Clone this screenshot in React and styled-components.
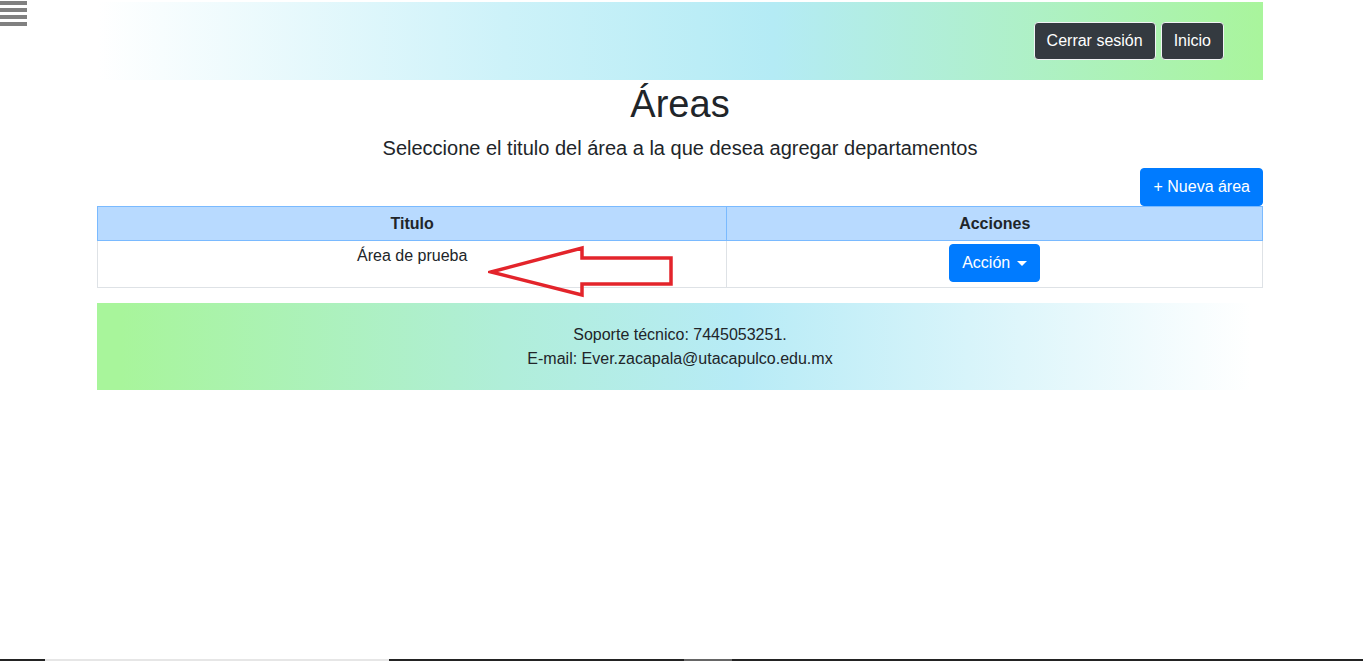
import styled, { createGlobalStyle } from "styled-components";

const GlobalStyle = createGlobalStyle`
  html, body {
    margin: 0;
    padding: 0;
  }
  body {
    font-family: "Liberation Sans", Arial, sans-serif;
    font-size: 16px;
    line-height: 1.5;
    color: #212529;
    background: #fff;
  }
  * {
    box-sizing: border-box;
  }
`;

const Page = styled.div`
  position: relative;
  min-height: 100vh;
  display: flex;
  flex-direction: column;
`;

const MenuToggle = styled.div`
  position: absolute;
  top: 1px;
  left: 0;
  width: 27px;
  display: flex;
  flex-direction: column;
  gap: 3px;
  span {
    display: block;
    height: 4px;
    background: #808080;
  }
`;

const Container = styled.div`
  width: 1166px;
  margin-left: 97px;
  padding-top: 2px;
`;

const Header = styled.header`
  height: 78px;
  display: flex;
  align-items: center;
  justify-content: flex-end;
  gap: 5px;
  padding-right: 39px;
  background: linear-gradient(to right, #ffffff 0%, #cdf2f9 35%, #b4ebf5 58%, #a9f59c 100%);
`;

const DarkButton = styled.button`
  font-family: inherit;
  font-size: 16px;
  line-height: 24px;
  padding: 6px 12px;
  color: #fff;
  background: #343a40;
  border: 1px solid #f1f3f5;
  border-radius: 4px;
  cursor: pointer;
`;

const Title = styled.h1`
  margin: 0;
  font-size: 38px;
  font-weight: 500;
  line-height: 48px;
  text-align: center;
`;

const Subtitle = styled.p`
  margin: 5px 0 0;
  font-size: 20px;
  line-height: 30px;
  text-align: center;
`;

const ToolRow = styled.div`
  display: flex;
  justify-content: flex-end;
  margin-top: 5px;
`;

const PrimaryButton = styled.button`
  display: inline-flex;
  align-items: center;
  font-family: inherit;
  font-size: 16px;
  line-height: 24px;
  padding: 6px 12px;
  color: #fff;
  background: #007bff;
  border: 1px solid #007bff;
  border-radius: 4px;
  cursor: pointer;
`;

const Caret = styled.span`
  display: inline-block;
  margin-left: 7px;
  border-top: 5px solid #fff;
  border-left: 5px solid transparent;
  border-right: 5px solid transparent;
`;

const TableWrap = styled.div`
  position: relative;
`;

const Table = styled.table`
  width: 100%;
  border-collapse: collapse;
  border: 1px solid #dee2e6;
`;

const Th = styled.th`
  width: ${(p) => p.$w}px;
  height: 34px;
  padding: 0 4.8px;
  font-weight: 700;
  text-align: center;
  background: #b8daff;
  border: 1px solid #7abaff;
`;

const Td = styled.td`
  height: 47px;
  padding: 3px 4.8px 4px;
  text-align: center;
  vertical-align: top;
  border: 1px solid #dee2e6;
`;

const Arrow = styled.svg`
  position: absolute;
  left: 391px;
  top: 39px;
  pointer-events: none;
`;

const Footer = styled.footer`
  margin-top: 15px;
  height: 87px;
  display: flex;
  flex-direction: column;
  align-items: center;
  justify-content: center;
  background: linear-gradient(to right, #a8f59b 2%, #b0eed9 35%, #b7ebf6 55%, #ffffff 99%);
`;

const FooterLine = styled.div`
  font-size: 16px;
  line-height: 24px;
`;

const Spacer = styled.div`
  flex: 1;
`;

const BottomBar = styled.div`
  display: flex;
  height: 2px;
  background: #232323;
`;

const BarPart = styled.div`
  width: ${(p) => p.$w}px;
  background: ${(p) => p.$c};
`;

export default function App() {
  return (
    <>
      <GlobalStyle />
      <Page>
        <MenuToggle>
          <span />
          <span />
          <span />
          <span />
        </MenuToggle>

        <Container>
          <Header>
            <DarkButton>Cerrar sesión</DarkButton>
            <DarkButton>Inicio</DarkButton>
          </Header>

          <Title>Áreas</Title>
          <Subtitle>Seleccione el titulo del área a la que desea agregar departamentos</Subtitle>

          <ToolRow>
            <PrimaryButton>+ Nueva área</PrimaryButton>
          </ToolRow>

          <TableWrap>
            <Table>
              <thead>
                <tr>
                  <Th $w={630}>Titulo</Th>
                  <Th $w={536}>Acciones</Th>
                </tr>
              </thead>
              <tbody>
                <tr>
                  <Td>Área de prueba</Td>
                  <Td>
                    <PrimaryButton>
                      Acción
                      <Caret />
                    </PrimaryButton>
                  </Td>
                </tr>
              </tbody>
            </Table>
            <Arrow width="190" height="60" viewBox="0 0 190 60">
              <polygon
                points="3,27 94,3 94,13 183,13 183,39 94,39 94,50"
                fill="none"
                stroke="#e3242b"
                strokeWidth="3.5"
                strokeLinejoin="miter"
              />
            </Arrow>
          </TableWrap>

          <Footer>
            <FooterLine>Soporte técnico: 7445053251.</FooterLine>
            <FooterLine>E-mail: Ever.zacapala@utacapulco.edu.mx</FooterLine>
          </Footer>
        </Container>

        <Spacer />
        <BottomBar>
          <BarPart $w={45} $c="#232323" />
          <BarPart $w={344} $c="#e6e6e6" />
          <BarPart $w={295} $c="#232323" />
          <BarPart $w={48} $c="#666666" />
        </BottomBar>
      </Page>
    </>
  );
}
